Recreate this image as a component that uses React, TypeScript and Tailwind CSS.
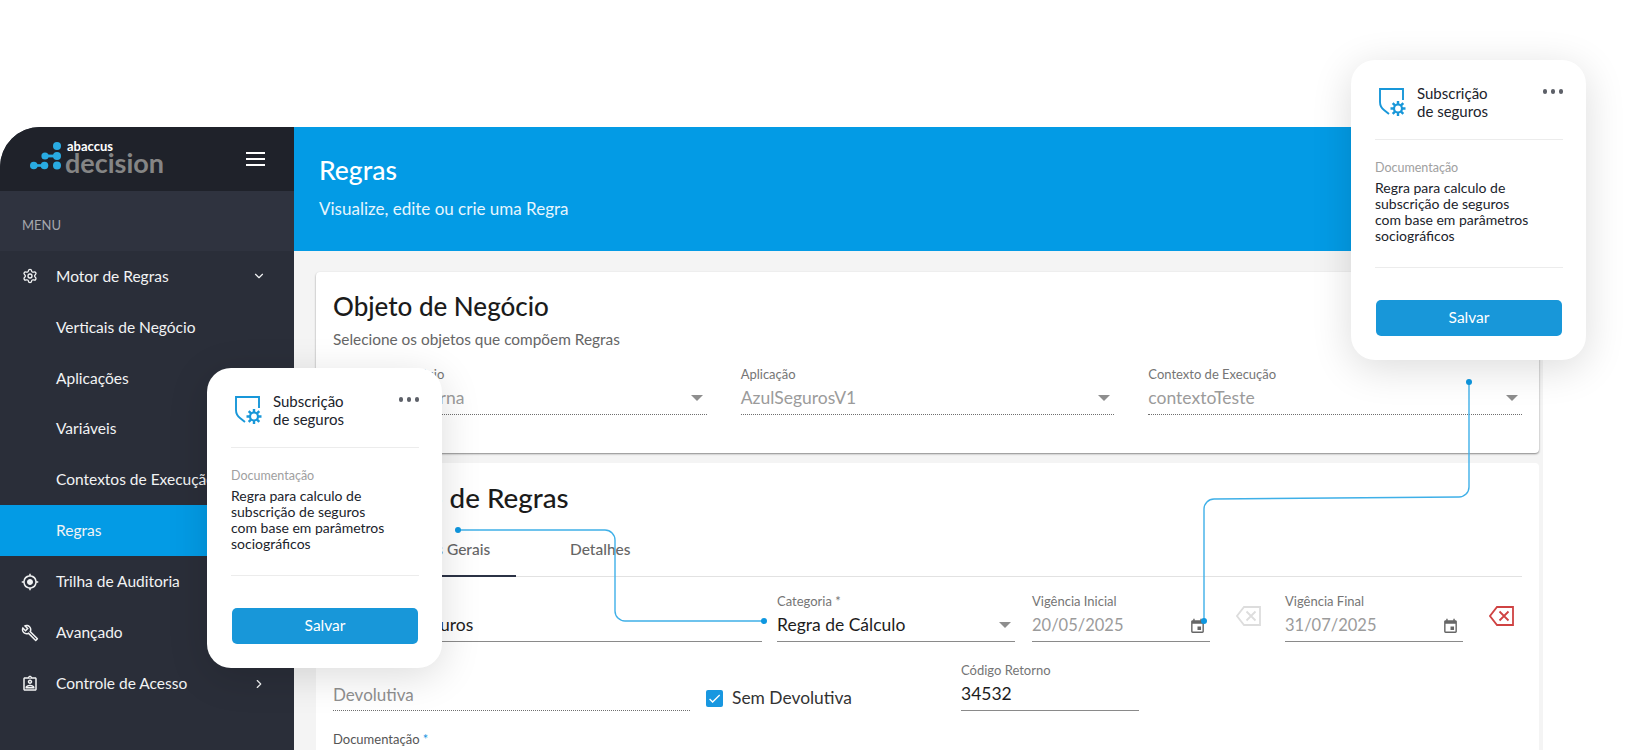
import React from 'react'
import { Settings, ChevronDown, ChevronRight } from 'lucide-react'
import { MdGpsFixed, MdOutlineBuild, MdOutlineAssignmentInd, MdEvent, MdCheck } from 'react-icons/md'

const font = { fontFamily: '"Lato", "Noto Sans", sans-serif' }

const Logo = () => (
  <div className="flex items-start ml-[30px] h-[44px]">
    <svg width="32" height="32" viewBox="0 0 32 32" className="mt-[3px] mr-[3px]">
      <g fill="#29abe2">
        <circle cx="27" cy="6" r="4" />
        <circle cx="15" cy="16" r="3.6" />
        <circle cx="27" cy="16" r="4" />
        <rect x="15" y="14.6" width="12" height="2.8" />
        <circle cx="3.8" cy="25.5" r="3.8" />
        <circle cx="14.5" cy="25.5" r="3.8" />
        <rect x="4" y="24.2" width="10" height="2.6" />
        <circle cx="27" cy="25.5" r="4" />
      </g>
    </svg>
    <div className="flex flex-col">
      <span className="text-white font-bold text-[13px] leading-[11px] ml-[2px] mt-[4px]">abaccus</span>
      <span className="text-[#858585] font-bold text-[27px] leading-[22px]">decision</span>
    </div>
  </div>
)

const menu = [
  { label: 'Motor de Regras', icon: <Settings size={16} strokeWidth={2} />, chevron: 'down' },
  { label: 'Verticais de Negócio' },
  { label: 'Aplicações' },
  { label: 'Variáveis' },
  { label: 'Contextos de Execução' },
  { label: 'Regras', active: true },
  { label: 'Trilha de Auditoria', icon: <MdGpsFixed size={18} /> },
  { label: 'Avançado', icon: <MdOutlineBuild size={18} /> },
  { label: 'Controle de Acesso', icon: <MdOutlineAssignmentInd size={18} />, chevron: 'right' },
]

const Sidebar = () => (
  <aside className="w-[294px] shrink-0 bg-[#2a2e39] rounded-tl-[40px] overflow-hidden">
    <div className="h-[64px] bg-[#1f222a] flex items-center justify-between pr-[29px]">
      <Logo />
      <div className="flex flex-col gap-[4px] w-[19px]">
        <span className="h-[2px] bg-white" />
        <span className="h-[2px] bg-white" />
        <span className="h-[2px] bg-white" />
      </div>
    </div>
    <div className="h-[60px] bg-[#2f333f] flex items-center pl-[22px] pt-[9px] text-[13px] text-[#a5a7ad]">MENU</div>
    {menu.map(item => (
      <div
        key={item.label}
        className={`h-[50.9px] flex items-center text-[15.5px] text-[#f2f3f4] relative ${item.active ? 'bg-[#039be5]' : ''}`}
      >
        <span className="w-[56px] flex justify-center pl-[3px] shrink-0">{item.icon}</span>
        <span className="whitespace-nowrap">{item.label}</span>
        {item.chevron === 'down' && <ChevronDown size={14} className="absolute left-[252px]" />}
        {item.chevron === 'right' && <ChevronRight size={14} className="absolute left-[252px]" />}
      </div>
    ))}
  </aside>
)

const Field = ({ label, value, w, dim, dashed, arrow, calendar }: {
  label: string
  value: string
  w?: string
  dim?: boolean
  dashed?: boolean
  arrow?: boolean
  calendar?: boolean
}) => (
  <div className={`${w ?? ''} h-[49px] shrink-0 flex flex-col`}>
    <span className="text-[13px] leading-[17px] text-[#757575] whitespace-nowrap">{label}</span>
    <div
      className={`mt-[3px] h-[29px] flex items-center justify-between pb-[4px] border-b ${dashed ? 'border-dotted border-[#6f6f6f]' : 'border-[#8a8a8a]'}`}
    >
      <span className={`leading-[24px] whitespace-nowrap ${calendar ? 'text-[16.5px]' : 'text-[17.5px]'} ${dim ? 'text-[#9b9b9b]' : 'text-[#1d1d1d]'}`}>
        {value}
      </span>
      {arrow && <span className="mr-[4px] w-0 h-0 border-x-[6px] border-x-transparent border-t-[6px] border-t-[#8e8e8e]" />}
      {calendar && <MdEvent size={17} className="text-[#666666] mr-[4px] mt-[3px]" />}
    </div>
  </div>
)

const DeleteIcon = ({ color }: { color: string }) => (
  <svg width="25" height="20" viewBox="0 0 25 20" fill="none" stroke={color} strokeWidth="1.8" className="shrink-0">
    <path d="M8 1H24V19H8L1 10Z" />
    <path d="M10.5 5.5L19.5 14.5M19.5 5.5L10.5 14.5" />
  </svg>
)

const ShieldIcon = () => (
  <svg width="32" height="32" viewBox="0 0 32 32" fill="none" stroke="#1897d9" className="shrink-0">
    <path d="M24 13V2H1V15Q1 20 5 23L10 27" strokeWidth="1.9" />
    <circle cx="19" cy="21.5" r="4" strokeWidth="2.2" />
    <g strokeWidth="2.4">
      <path d="M19 14V17.5M19 25.5V29M11.5 21.5H15M23 21.5H26.5M13.7 16.2L16.2 18.7M21.8 24.3L24.3 26.8M13.7 26.8L16.2 24.3M21.8 18.7L24.3 16.2" />
    </g>
  </svg>
)

const Popup = ({ className }: { className: string }) => (
  <div className={`absolute w-[235px] h-[300px] bg-white rounded-[24px] shadow-[0_8px_40px_rgba(0,0,0,0.14)] pl-[24px] pr-[23px] ${className}`}>
    <div className="h-[80px] border-b border-[#ececec] flex pt-[27px]">
      <span className="ml-[4px] mr-[6px]"><ShieldIcon /></span>
      <div className="text-[15px] leading-[18px] text-[#20232b] mt-[-3px] flex-1">
        Subscrição
        <br />
        de seguros
      </div>
      <div className="flex gap-[3.5px] mt-[2px]">
        <span className="w-[4.5px] h-[4.5px] rounded-full bg-[#5d6068]" />
        <span className="w-[4.5px] h-[4.5px] rounded-full bg-[#5d6068]" />
        <span className="w-[4.5px] h-[4.5px] rounded-full bg-[#5d6068]" />
      </div>
    </div>
    <div className="h-[128px] border-b border-[#ececec] pt-[20px]">
      <div className="text-[12.5px] leading-[16px] text-[#a0a0a0]">Documentação</div>
      <p className="mt-[4px] text-[14px] leading-[16px] text-[#20232b]">
        Regra para calculo de
        <br />
        subscrição de seguros
        <br />
        com base em parâmetros
        <br />
        sociográficos
      </p>
    </div>
    <button className="mt-[32px] ml-[1px] w-[186px] h-[36px] rounded-[5px] bg-[#1897d9] text-white text-[15.5px]">
      Salvar
    </button>
  </div>
)

const Connectors = () => (
  <svg width="1646" height="750" viewBox="0 0 1646 750" fill="none" className="absolute inset-0 pointer-events-none">
    <path d="M458 530H605a10 10 0 0 1 10 10V611a10 10 0 0 0 10 10H764" stroke="#3fb0e8" strokeWidth="1.4" />
    <circle cx="458" cy="530" r="3" fill="#0e97e0" />
    <circle cx="764" cy="621" r="3" fill="#0e97e0" />
    <path d="M1469 382V487a10 10 0 0 1-10 10L1214 499a10 10 0 0 0-10 10V621" stroke="#3fb0e8" strokeWidth="1.4" />
    <circle cx="1469" cy="382" r="3" fill="#0e97e0" />
    <circle cx="1204" cy="621" r="3" fill="#0e97e0" />
  </svg>
)

export default function App() {
  return (
    <div className="relative w-full h-[750px] overflow-hidden bg-white" style={font}>
      <div className="pt-[127px] flex w-[1543px] h-[750px]">
        <Sidebar />
        <main className="flex-1 bg-[#f4f4f4] min-w-0">
          <header className="h-[124px] bg-[#039be5] text-white pl-[25px] pt-[27px]">
            <h1 className="text-[26.5px] leading-[32px] font-medium">Regras</h1>
            <p className="mt-[12px] text-[17px] leading-[22px] text-[#e6f5fd]">Visualize, edite ou crie uma Regra</p>
          </header>

          <section className="ml-[22px] mr-[4px] mt-[21px] h-[181px] bg-white rounded-[4px] shadow-[0_1px_2px_rgba(0,0,0,0.45)] px-[17px] pt-[18px]">
            <h2 className="text-[26px] leading-[32px] font-medium text-[#1b1b1b]">Objeto de Negócio</h2>
            <p className="mt-[7px] text-[15.4px] leading-[20px] text-[#666666]">Selecione os objetos que compõem Regras</p>
            <div className="mt-[17px] grid grid-cols-3 gap-x-[34px]">
              <Field label="Vertical de Negócio" value="Segurado Interna" dim dashed arrow />
              <Field label="Aplicação" value="AzulSegurosV1" dim dashed arrow />
              <Field label="Contexto de Execução" value="contextoTeste" dim dashed arrow />
            </div>
          </section>

          <section className="ml-[22px] mr-[4px] mt-[10px] h-[300px] bg-white rounded-[4px] px-[17px] pt-[19px]">
            <h2 className="text-[27.8px] leading-[32px] font-medium text-[#1b1b1b]">Cadastro de Regras</h2>
            <div className="mt-[10px] h-[53px] flex border-b border-[#e2e2e2] text-[15.5px] text-[#666666]">
              <div className="w-[183px] h-[53px] border-b-2 border-[#2b3245] flex items-center justify-center font-medium whitespace-nowrap">
                Informações Gerais
              </div>
              <div className="ml-[54px] h-[52px] flex items-center font-medium">Detalhes</div>
            </div>

            <div className="mt-[16px] flex items-start">
              <Field label="Nome *" value="Regras de Seguros" w="w-[429px]" />
              <div className="w-[15px]" />
              <Field label="Categoria *" value="Regra de Cálculo" w="w-[238px]" arrow />
              <div className="w-[17px]" />
              <Field label="Vigência Inicial" value="20/05/2025" w="w-[178px]" dim calendar />
              <span className="ml-[26px] mr-[24px] mt-[13px]"><DeleteIcon color="#dddddd" /></span>
              <Field label="Vigência Final" value="31/07/2025" w="w-[178px]" dim calendar />
              <span className="ml-[26px] mt-[13px]"><DeleteIcon color="#cf4242" /></span>
            </div>

            <div className="mt-[20px] flex items-start">
              <div className="w-[357px] h-[49px] flex flex-col justify-end">
                <div className="h-[29px] pb-[3px] flex items-center border-b border-dotted border-[#6f6f6f] text-[17px] text-[#8f8f8f]">
                  Devolutiva
                </div>
              </div>
              <div className="ml-[16px] mt-[26px] flex items-center">
                <span className="w-[17px] h-[17px] rounded-[2px] bg-[#1897e0] flex items-center justify-center text-white">
                  <MdCheck size={15} />
                </span>
                <span className="ml-[9px] text-[17.4px] leading-[20px] text-[#333333]">Sem Devolutiva</span>
              </div>
              <div className="flex-1" />
              <Field label="Código Retorno" value="34532" w="w-[178px] mr-[383px]" />
            </div>

            <div className="mt-[20px] text-[13px] leading-[17px] text-[#555555]">
              Documentação <span className="text-[#1897e0]">*</span>
            </div>
          </section>
        </main>
      </div>

      <Connectors />
      <Popup className="left-[207px] top-[368px]" />
      <Popup className="left-[1351px] top-[60px]" />
    </div>
  )
}
